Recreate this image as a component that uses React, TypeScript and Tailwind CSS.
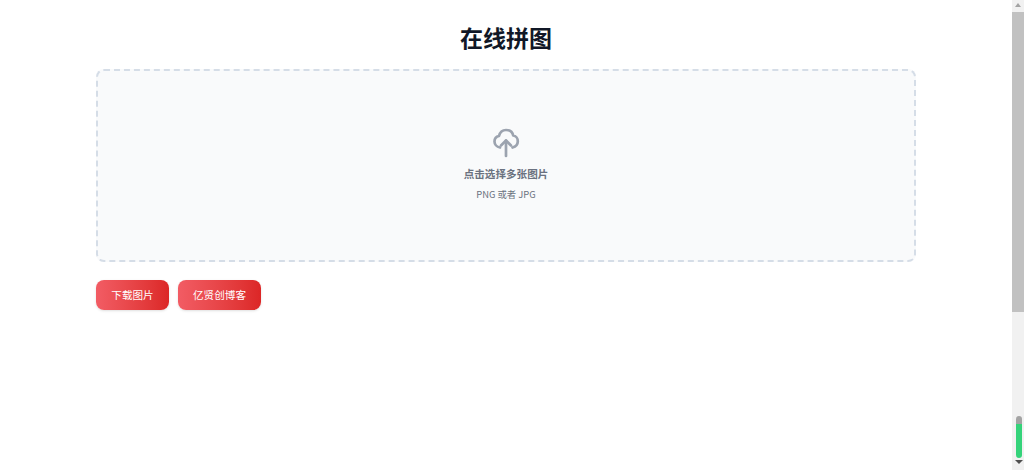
import React from 'react';

const font = { fontFamily: '"Noto Sans CJK SC", "Noto Sans", sans-serif' };

const ActionButton: React.FC<{ label: string; width: string }> = ({ label, width }) => (
  <button className={`h-[30px] ${width} rounded-lg bg-gradient-to-r from-[#f25c64] to-[#dc2626] text-[10.6px] text-white shadow-sm`}>
    {label}
  </button>
);

const UploadIcon = () => (
  <svg width="28" height="30" viewBox="0 0 28 30" fill="none" stroke="#9ca3af" strokeWidth="2.7" strokeLinecap="round" strokeLinejoin="round">
    <path d="M8 19.5C4.5 19 2.5 16 2.5 13.5 2.5 10.5 4.5 8.5 7 8 8 4 11 2 14 2 17.5 2 20.5 4 21.2 7.5 24 7.8 25.8 10.5 25.8 13.2 25.8 16 24 18.5 20.5 19.5" />
    <path d="M14 28V12.5" />
    <path d="M9 17.5l5-5 5 5" />
  </svg>
);

const App: React.FC = () => {
  return (
    <div className="flex h-[470px] w-[1024px] overflow-hidden bg-white" style={font}>
      <main className="flex-1 px-[96px]">
        <h1 className="mt-[20px] text-center text-[23px] leading-[34px] font-bold text-[#111827]">在线拼图</h1>
        <div className="mt-[15px] flex h-[193px] flex-col items-center rounded-lg border-2 border-dashed border-[#d5dde7] bg-[#f9fafb] pt-[57px]">
          <UploadIcon />
          <p className="mt-[8px] text-[10.6px] leading-[16px] font-semibold text-[#6b7280]">点击选择多张图片</p>
          <p className="mt-[4px] text-[9.4px] leading-[16px] text-[#6b7280]">PNG 或者 JPG</p>
        </div>
        <div className="mt-[18px] flex gap-[9px]">
          <ActionButton label="下载图片" width="w-[73px]" />
          <ActionButton label="亿贤创博客" width="w-[83px]" />
        </div>
      </main>
      <aside className="relative h-full w-3 bg-[#f1f1f1]">
        <div className="absolute top-[3px] left-[3px] h-0 w-0 border-x-[3px] border-b-[4px] border-x-transparent border-b-[#a3a3a3]" />
        <div className="mt-[12px] h-[300px] bg-[#c1c1c1]" />
        <div className="absolute top-[416px] left-[4px] h-[8px] w-[6px] rounded-t-sm bg-[#a3a3a3]" />
        <div className="absolute top-[424px] left-[4px] h-[34px] w-[6px] rounded-b-sm bg-[#34d37a]" />
        <div className="absolute top-[460px] left-[3px] h-0 w-0 border-x-[4px] border-t-[4px] border-x-transparent border-t-[#505050]" />
      </aside>
    </div>
  );
};

export default App;
